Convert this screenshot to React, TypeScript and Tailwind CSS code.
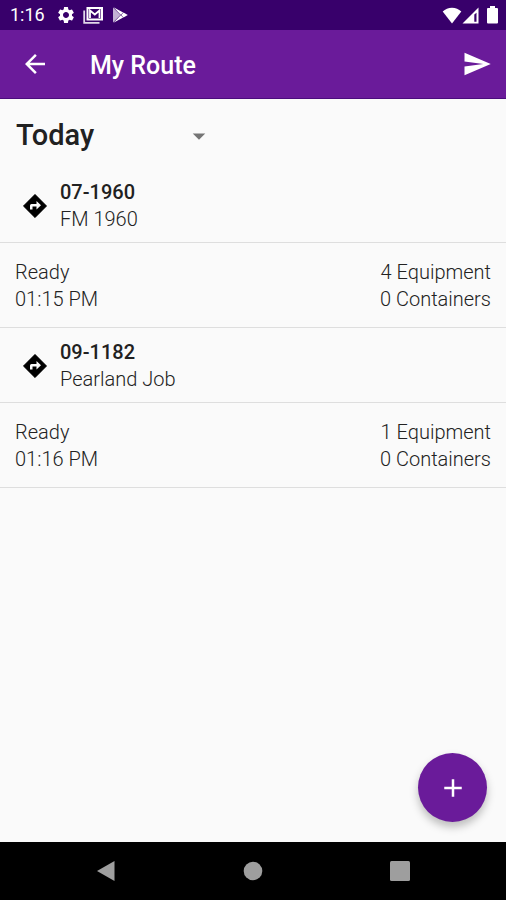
import { MdAdd, MdArrowBack, MdArrowDropDown, MdSend, MdSettings } from "react-icons/md";

type Stop = {
    code: string;
    name: string;
    status: string;
    time: string;
    equipment: number;
    containers: number;
};

const stops: Stop[] = [
    { code: "07-1960", name: "FM 1960", status: "Ready", time: "01:15 PM", equipment: 4, containers: 0 },
    { code: "09-1182", name: "Pearland Job", status: "Ready", time: "01:16 PM", equipment: 1, containers: 0 },
];

export default function App() {
    return (
        <div className="flex min-h-screen flex-col bg-[#fafafa] font-[Roboto,sans-serif] text-[#222]">
            <StatusBar />
            <AppBar />
            <main className="relative grow">
                <DayPicker />
                <ul>
                    {stops.map((stop) => (
                        <StopItem key={stop.code} stop={stop} />
                    ))}
                </ul>
                <button
                    type="button"
                    aria-label="Add stop"
                    className="absolute right-[19px] bottom-5 flex size-[69px] items-center justify-center rounded-full bg-[#6a1b9a] text-white shadow-[0_5px_8px_rgba(0,0,0,0.25)]"
                >
                    <MdAdd className="size-[30px]" />
                </button>
            </main>
            <NavBar />
        </div>
    )
}

function StatusBar() {
    return (
        <div className="flex h-[30px] items-center bg-[#38006b] pr-2 pl-[10px] text-white">
            <span className="text-lg">1:16</span>
            <MdSettings className="ml-[11px] size-5" />
            {/* Mail */}
            <svg viewBox="0 0 20 17" className="ml-[7px] h-[17px] w-5" fill="none" stroke="currentColor">
                <path d="M1.200 3.500v12.300h15.300" strokeWidth="1.800" opacity="0.85" />
                <rect x="4.500" y="1" width="14.500" height="11.500" strokeWidth="2" />
                <path d="M7 11V3.500l4.800 4 4.700-4V11" strokeWidth="1.800" />
            </svg>
            {/* Play store */}
            <svg viewBox="0 0 16 16" className="ml-[9px] size-4" fill="currentColor">
                <path d="M1 .5v15L8.500 8z" opacity="0.7" />
                <path d="M1.500 .3L11.200 5.400 8.700 7.800z" />
                <path d="M1.500 15.700L11.200 10.600 8.700 8.200z" />
                <path d="M11.500 5.600L15.800 8l-4.300 2.400L9.200 8z" />
            </svg>
            <div className="ml-auto flex items-center">
                <svg viewBox="0 0 20 17" className="h-[17px] w-5" fill="currentColor">
                    <path d="M10 16.500L.7 4.500C3.200 2 6.400.7 10 .7s6.800 1.300 9.300 3.800z" />
                </svg>
                <svg viewBox="0 0 17 17" className="size-[17px]" fill="currentColor">
                    <path d="M.5 16.500L16.500.5v16H.5zM12.300 7.500v7.200h2.200V5.800z" fillRule="evenodd" />
                </svg>
                <svg viewBox="0 0 11 18" className="ml-2 h-[18px] w-[11px]" fill="currentColor">
                    <path d="M3 0h5v2h2q1 0 1 1v13.500q0 1-1 1H1q-1 0-1-1V3q0-1 1-1h2z" />
                </svg>
            </div>
        </div>
    )
}

function AppBar() {
    return (
        <header className="flex h-[69px] items-center border-b border-[#4a0d7c] bg-[#6a1b9a] pr-[14px] pl-5 text-white">
            <button type="button" aria-label="Back">
                <MdArrowBack className="size-[30px]" />
            </button>
            <h1 className="ml-10 pt-1 text-[25px] leading-8 font-medium">My Route</h1>
            <button type="button" aria-label="Send" className="ml-auto">
                <MdSend className="size-[30px]" />
            </button>
        </header>
    )
}

function DayPicker() {
    return (
        <div className="flex h-[69px] items-center px-4 pt-1">
            <div className="grid items-center">
                <select
                    aria-label="Day"
                    className="col-start-1 row-start-1 h-12 w-[198px] appearance-none bg-transparent text-[29px] font-medium text-[#212121]"
                >
                    <option>Today</option>
                </select>
                <MdArrowDropDown className="pointer-events-none col-start-1 row-start-1 size-[30px] justify-self-end text-[#757575]" />
            </div>
        </div>
    )
}

function DirectionsIcon() {
    return (
        <svg viewBox="0 0 24 24" className="size-6" aria-hidden="true">
            <path d="M12 .3L23.700 12 12 23.700.3 12z" fill="#000" stroke="#000" strokeWidth=".6" strokeLinejoin="round" />
            <path d="M7 15.500V11.500q0-1.500 1.500-1.500H13.500V7L18 11.200l-4.500 4.200V12.500H9.500v3z" fill="#fafafa" />
        </svg>
    )
}

function StopItem({ stop }: { stop: Stop }) {
    return (
        <li className="text-[20px] leading-[27px] font-light">
            <div className="flex items-center border-b border-[#dedede] px-[23px] pt-[11px] pb-[9px]">
                <DirectionsIcon />
                <div className="ml-[13px]">
                    <h2 className="font-medium text-[#212121]">{stop.code}</h2>
                    <p>{stop.name}</p>
                </div>
            </div>
            <div className="flex justify-between border-b border-[#dedede] px-[15px] pt-4 pb-[14px]">
                <div>
                    <p>{stop.status}</p>
                    <p>{stop.time}</p>
                </div>
                <div className="text-right">
                    <p>{stop.equipment} Equipment</p>
                    <p>{stop.containers} Containers</p>
                </div>
            </div>
        </li>
    )
}

function NavBar() {
    return (
        <nav className="flex h-[58px] items-center justify-around bg-black px-8 text-[#9e9e9e]">
            <button type="button" aria-label="Back">
                <svg viewBox="0 0 20 22" className="h-[22px] w-5" fill="currentColor">
                    <path d="M18.500 1v20L1 11z" />
                </svg>
            </button>
            <button type="button" aria-label="Home">
                <svg viewBox="0 0 20 20" className="size-5" fill="currentColor">
                    <circle cx="10" cy="10" r="9.300" />
                </svg>
            </button>
            <button type="button" aria-label="Recent apps">
                <svg viewBox="0 0 20 20" className="size-5" fill="currentColor">
                    <rect width="20" height="20" rx="1.500" />
                </svg>
            </button>
        </nav>
    )
}
